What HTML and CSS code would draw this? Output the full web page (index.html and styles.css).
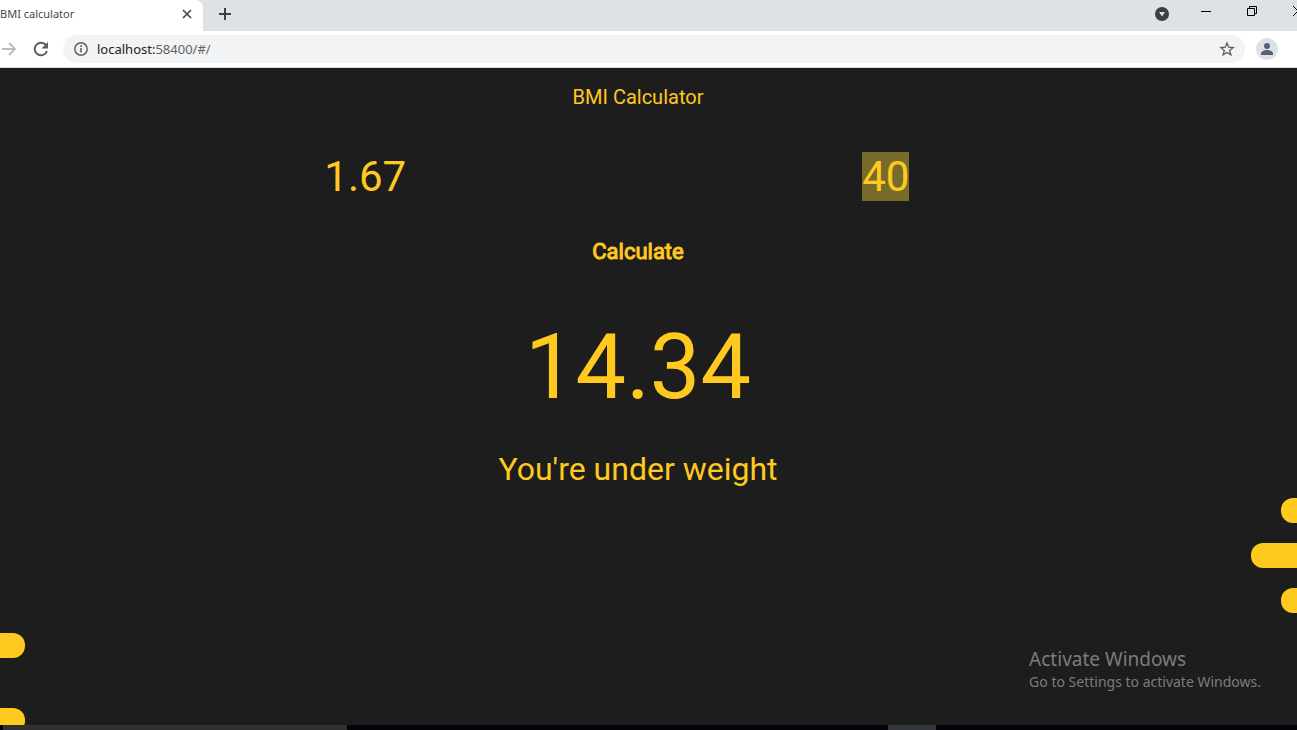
FILE: index.html
```html
<!DOCTYPE html>
<html lang="en">
<head>
<meta charset="utf-8">
<title>BMI calculator</title>
<link rel="stylesheet" href="styles.css">
</head>
<body>
<div class="window">
  <header class="tabstrip">
    <div class="tab">
      <span class="tab-title">BMI calculator</span>
      <button class="icon-button" aria-label="Close tab"><svg width="12" height="12" viewBox="0 0 12 12"><path d="M2 2l8 8M10 2l-8 8" stroke="#45494d" stroke-width="1.7"/></svg></button>
    </div>
    <button class="icon-button new-tab" aria-label="New tab"><svg width="14" height="14" viewBox="0 0 14 14"><path d="M7 1v12M1 7h12" stroke="#3c4043" stroke-width="2"/></svg></button>
    <div class="window-controls">
      <button class="icon-button" aria-label="Search tabs"><svg width="14" height="14" viewBox="0 0 14 14"><circle cx="7" cy="7" r="7" fill="#3c4043"/><path d="M4 5h6l-3 4.500z" fill="#dee1e6"/></svg></button>
      <button class="icon-button caption" aria-label="Minimize"><svg width="10" height="10" viewBox="0 0 10 10"><path d="M0 5.500h10" stroke="#000"/></svg></button>
      <button class="icon-button caption" aria-label="Restore"><svg width="10" height="10" viewBox="0 0 10 10"><path d="M.5 2.500h7v7h-7zM2.500 2.500v-2h7v7h-2" fill="none" stroke="#000"/></svg></button>
      <button class="icon-button caption" aria-label="Close window"><svg width="10" height="10" viewBox="0 0 10 10"><path d="M0 0l10 10M10 0L0 10" stroke="#000"/></svg></button>
    </div>
  </header>
  <nav class="toolbar">
    <button class="icon-button" aria-label="Forward"><svg width="16" height="16" viewBox="0 0 16 16"><path d="M2 8h13M9 2l6 6-6 6" fill="none" stroke="#babcbe" stroke-width="1.800"/></svg></button>
    <button class="icon-button reload" aria-label="Reload"><svg width="16" height="16" viewBox="0 0 16 16"><path d="M13.300 4.500A6.300 6.300 0 1 0 14 10" fill="none" stroke="#5a5d61" stroke-width="2"/><path d="M15 1v6.500H8.500z" fill="#5a5d61"/></svg></button>
    <div class="address">
      <svg width="14" height="14" viewBox="0 0 14 14"><circle cx="7" cy="7" r="6.200" fill="none" stroke="#5f6368" stroke-width="1.500"/><path d="M7 6v4.500M7 3.300v1.600" stroke="#5f6368" stroke-width="1.600"/></svg>
      <span class="url">localhost:<span class="url-rest">58400/#/</span></span>
      <button class="icon-button" aria-label="Bookmark"><svg width="16" height="16" viewBox="0 0 16 16"><path d="M8 2l1.700 4.200 4.500.3-3.500 2.900 1.200 4.400L8 11.400l-3.900 2.400 1.200-4.400-3.500-2.900 4.500-.3z" fill="none" stroke="#5a5d61" stroke-width="1.300"/></svg></button>
    </div>
    <button class="icon-button profile" aria-label="Profile"><svg width="22" height="22" viewBox="0 0 22 22"><circle cx="11" cy="11" r="11" fill="#dee1e6"/><circle cx="11" cy="8" r="3" fill="#566077"/><path d="M5 17v-1.500c0-2.300 3.500-3.500 6-3.500s6 1.200 6 3.500V17z" fill="#566077"/></svg></button>
  </nav>
  <main class="app">
    <h1 class="title">BMI Calculator</h1>
    <form class="fields">
      <input class="field height-field" aria-label="Height" value="1.67">
      <input class="field weight-field" aria-label="Weight" value="40">
    </form>
    <button class="calculate">Calculate</button>
    <output class="result">14.34</output>
    <p class="message">You're under weight</p>
    <div class="bars bars-right">
      <div class="bar bar-short"></div>
      <div class="bar bar-long"></div>
      <div class="bar bar-short"></div>
    </div>
    <div class="bars bars-left">
      <div class="bar bar-medium"></div>
      <div class="bar bar-medium"></div>
    </div>
    <aside class="watermark">
      <p class="watermark-title">Activate Windows</p>
      <p class="watermark-text">Go to Settings to activate Windows.</p>
    </aside>
  </main>
  <footer class="taskbar">
    <div class="search-box"></div>
    <div class="active-app"></div>
  </footer>
</div>
</body>
</html>
```
FILE: styles.css
```css
* { box-sizing: border-box; }
body { margin: 0; font-family: "Noto Sans", sans-serif; }
h1, p { margin: 0; font-weight: 400; }
svg { display: block; flex: none; }
button { padding: 0; border: 0; background: none; font: inherit; }

.window { display: flex; flex-direction: column; height: 100vh; overflow: hidden; }
.icon-button { display: flex; flex: none; align-items: center; justify-content: center; }

.tabstrip { display: flex; flex: none; height: 31px; background: #dee1e6; }
.tab {
  display: flex; align-items: center; justify-content: space-between;
  width: 203px; padding: 0 10px 3px 0; background: #fff; border-radius: 0 8px 0 0;
}
.tab-title { font-size: 11px; line-height: 16px; color: #45494d; }
.new-tab { width: 44px; height: 28px; }
.window-controls { display: flex; margin-left: auto; margin-right: -24px; height: 28px; }
.window-controls .icon-button { width: 42px; }
.window-controls .caption { width: 46px; height: 22px; }

.toolbar {
  display: flex; flex: none; align-items: center; height: 37px;
  padding-right: 19px; background: #fff; border-bottom: 1px solid #dadce0;
}
.reload { margin: 0 14px 0 17px; }
.address {
  display: flex; flex: 1; align-items: center; gap: 9px;
  height: 28px; padding: 0 10px 0 11px; border-radius: 14px; background: #f1f3f4;
}
.url { flex: 1; font-size: 13px; line-height: 18px; color: #202124; }
.url-rest { color: #5f6368; }
.profile { margin-left: 11px; }

.app {
  position: relative; display: flex; flex-direction: column; flex: 1; min-height: 0;
  overflow: hidden; background: #1d1d1d; color: #ffc91f; font-family: Roboto, sans-serif;
}
.title, .calculate, .result, .message { flex: none; margin-right: 21px; text-align: center; }
.title { font-size: 20px; line-height: 58px; }
.fields {
  display: grid; flex: none; grid-template-columns: 1fr 1fr; justify-items: center;
  padding: 26px 151px 0 105px;
}
.field {
  height: 49px; padding: 0; border: 0; background: none; outline: 0;
  color: inherit; font-family: inherit; font-size: 42px; text-align: center;
}
.height-field { width: 130px; }
.weight-field { width: 47px; background: #776b29; }
.calculate {
  align-self: center; margin-top: 38px; color: inherit;
  font-size: 22px; line-height: 26px; -webkit-text-stroke: 1px #ffc91f;
}
.result { margin-top: 50px; font-size: 90px; line-height: 106px; }
.message { margin-top: 29px; font-size: 32px; line-height: 38px; }

.bars { display: flex; flex: none; flex-direction: column; }
.bars-right { align-items: flex-end; gap: 20px; margin-top: 10px; }
.bars-left { align-items: flex-start; gap: 50px; margin-top: 20px; }
.bar { height: 25px; background: #ffc91f; }
.bars-right .bar { border-radius: 12px 0 0 12px; }
.bars-left .bar { border-radius: 0 12px 12px 0; }
.bar-short { width: 16px; }
.bar-medium { width: 25px; }
.bar-long { width: 46px; }

.watermark {
  position: absolute; right: 36px; bottom: 33px;
  font-family: "Noto Sans", sans-serif; color: #7c7c7c;
}
.watermark-title { font-size: 19px; line-height: 26px; }
.watermark-text { font-size: 14px; line-height: 20px; }

.taskbar {
  display: flex; flex: none; justify-content: space-between;
  height: 5px; padding: 0 361px 0 3px; background: #020409;
}
.search-box { width: 344px; background: #303030; }
.active-app { width: 48px; background: #34373d; }
```
